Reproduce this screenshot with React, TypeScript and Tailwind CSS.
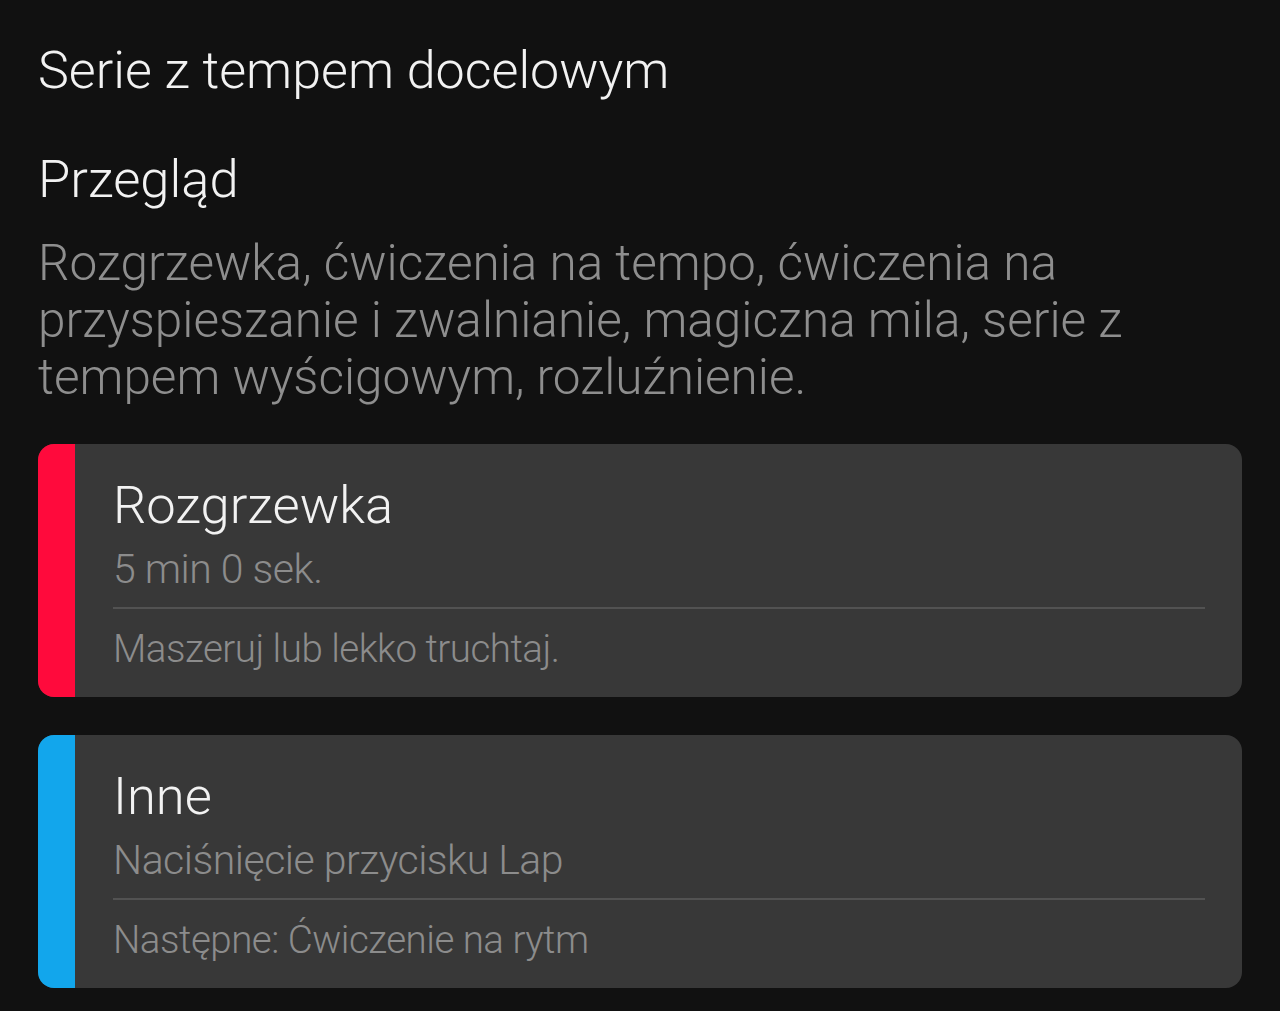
import React from "react";

type Step = {
  title: string;
  subtitle: string;
  note: string;
  accent: string;
};

const steps: Step[] = [
  {
    title: "Rozgrzewka",
    subtitle: "5 min 0 sek.",
    note: "Maszeruj lub lekko truchtaj.",
    accent: "bg-[#ff0a3c]",
  },
  {
    title: "Inne",
    subtitle: "Naciśnięcie przycisku Lap",
    note: "Następne: Ćwiczenie na rytm",
    accent: "bg-[#12a6ec]",
  },
];

const StepCard = ({ step }: { step: Step }) => (
  <div className="flex h-[253px] overflow-hidden rounded-[16px] bg-[#383838]">
    <div className={`w-[37px] shrink-0 ${step.accent}`} />
    <div className="flex flex-1 flex-col pl-[38px] pr-[37px] pt-[31px]">
      <h3 className="text-[52.5px] leading-[60px] font-light text-[#f2f2f2]">{step.title}</h3>
      <p className="mt-[9px] text-[41px] leading-[50px] font-light tracking-[-0.5px] text-[#8c8c8c]">
        {step.subtitle}
      </p>
      <div className="mt-[13px] h-[2px] bg-[#525252]" />
      <p className="mt-[17px] text-[38.5px] leading-[46px] font-light tracking-[-0.5px] text-[#8c8c8c]">
        {step.note}
      </p>
    </div>
  </div>
);

export default function App() {
  return (
    <div
      className="min-h-screen bg-[#111111] px-[38px] pt-[41px] pb-[24px]"
      style={{ fontFamily: "Roboto, 'Noto Sans', sans-serif" }}
    >
      <h1 className="text-[52px] leading-[60px] font-light text-[#f2f2f2]">Serie z tempem docelowym</h1>
      <h2 className="mt-[48px] text-[52.5px] leading-[60px] font-light text-[#f2f2f2]">Przegląd</h2>
      <p className="mt-[26px] text-[49.5px] leading-[57px] font-light text-[#8e8e8e]">
        Rozgrzewka, ćwiczenia na tempo, ćwiczenia na przyspieszanie i zwalnianie, magiczna mila, serie z tempem
        wyścigowym, rozluźnienie.
      </p>
      <div className="mt-[38px] flex flex-col gap-[38px]">
        {steps.map((s) => (
          <StepCard key={s.title} step={s} />
        ))}
      </div>
    </div>
  );
}
